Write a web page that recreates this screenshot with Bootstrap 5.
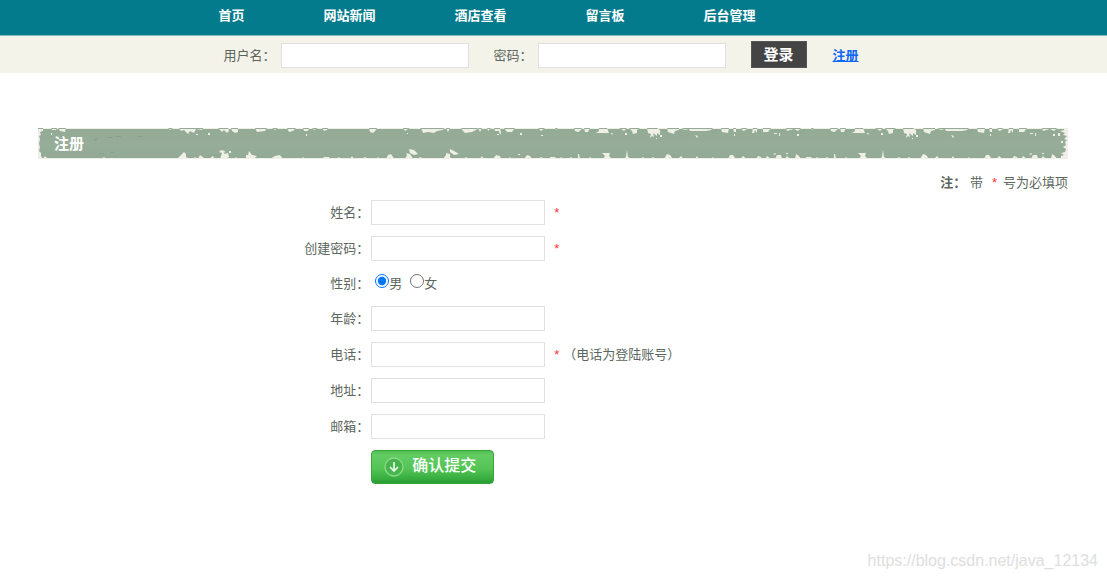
<!DOCTYPE html>
<html lang="zh-CN">
<head>
<meta charset="utf-8">
<meta name="viewport" content="width=device-width, initial-scale=1">
<title>注册</title>
<link href="https://cdn.jsdelivr.net/npm/bootstrap@5.3.0/dist/css/bootstrap.min.css" rel="stylesheet">
<style>
  body { font: 13px/20px "Liberation Sans", "Noto Sans CJK SC", sans-serif; color: #5c665e; background: #fff; }
  .site-nav { background: #047b8c; border-bottom: 1px solid #82bbc1; height: 36px; }
  .site-width { width: 100%; max-width: 670px; margin: 0 auto; }
  .site-nav .nav { gap: 79px; padding-top: 6px; }
  .site-nav a { color: #fff; font-weight: 700; text-decoration: none; }
  .login-bar { background: #f4f3e9; height: 37px; }
  .login-bar form { padding-left: 5px; }
  .login-bar label, .join-link { padding-top: 3px; }
  .text-field { border: 1px solid #dfe0df; border-radius: 0; background: #fff; height: 25px; padding: 2px 4px; width: 174px; font-size: 13px; color: inherit; display: block; }
  .login-bar .text-field { width: 188px; margin: 2px 25px 0 5px; }
  .login-btn { background: #444; color: #fff; border: 1px solid #555; border-radius: 0; padding: 0; width: 56px; height: 27px; font-size: 15px; line-height: 25px; font-weight: 700; }
  .join-link { color: #0b66f5; font-weight: 700; margin-left: 26px; }
  .page-main { padding: 55px 39px 24px 38px; }
  .title-bar { display: grid; height: 31px; }
  .title-bar > * { grid-area: 1 / 1; }
  .title-bar h1 { font-size: 15px; line-height: 20px; font-weight: 700; color: #fff; margin: 0; padding-left: 16px; align-self: center; z-index: 1; }
  .hint { padding: 14px 0 7px; }
  .hint .star { margin: 0 6px 0 9px; }
  .star { color: #f33; }
  .form-line { display: grid; grid-template-columns: 11fr 23fr; margin-bottom: 11px; align-items: center; min-height: 23px; }
  .form-line > :first-child { text-align: right; padding-right: 2px; }
  .form-line .star { margin-left: 9px; }
  .form-line input[type=radio] { width: 14px; height: 14px; margin: 0; accent-color: #0075ff; }
  .send-btn { display: flex; align-items: center; width: 123px; height: 34px; padding: 0 14px 3px 11px; gap: 7px; border: 1px solid #35a83c; border-radius: 4px; color: #fff; font-size: 16px; line-height: 24px; font-weight: 500; background: linear-gradient(#51bd52, #63cc64 12%, #54c456 55%, #38ae40 86%, #289b32); white-space: nowrap; }
  .page-foot { font-size: 16px; line-height: 20px; color: #dedede; padding: 0 9px 8px; }
</style>
</head>
<body class="d-flex flex-column min-vh-100">
<header>
  <nav class="site-nav">
    <div class="site-width">
      <div class="nav flex-nowrap text-nowrap">
        <a href="#">首页</a>
        <a href="#">网站新闻</a>
        <a href="#">酒店查看</a>
        <a href="#">留言板</a>
        <a href="#">后台管理</a>
      </div>
    </div>
  </nav>
  <div class="login-bar">
    <form class="site-width d-flex align-items-center h-100 text-nowrap">
      <label for="user">用户名：</label>
      <input class="text-field" id="user" type="text">
      <label for="pass">密码：</label>
      <input class="text-field" id="pass" type="password">
      <button class="login-btn" type="button">登录</button>
      <a class="join-link" href="#">注册</a>
    </form>
  </div>
</header>

<main class="page-main">
  <div class="title-bar">
    <svg width="100%" height="31" aria-hidden="true">
      <defs>
        <pattern id="worn" width="256" height="31" patternUnits="userSpaceOnUse">
          <path fill="#efeee7" d="M0 0H256V1H0z M5 0l1 2 2-2z M24 0l1 3 3 1 3-2 1-2z M34 0l1 4 3 0 2-4z M49 0l0 3-3 2h13l-2-5z M69 0l5 3 3-3z M79 0l3 3 1 3 4-1 0-3 3-2z M97 0l1 5 3 1-1 4 2-2 2 1-1-4 4 3 0-3 3 2 0-5-3-2z M117 0l1 4 6 2 1-3 4-1 0-2z M132 0l2 2 5-1 1 2h16l5-1 2-2z M171 0l1 4 6 1 1-5z M183 0l1 4 2 0v-4z M191 0l2 3 3-1 1-2z M203 0l-1 5 2 0 1-3 2 3v-5z M213 0l0 4 5 0 3-4z M236 0l1 3 7-2 4 2 3-3z M61 5l1 2 1-2z M75 5h2v2h-2z M106 10h1v1h-1z M110 7h2v2h-2z M145 7l3 1-1 2z M184 6h1v2h-1z M224 5h3v1h-3z M229 5h1v3h-1z M247 6h2v2h-2z"/>
          <path fill="#efeee7" d="M0 30H256V31H0z M0 31v-2l5 0 2 2z M9 31l2-2 3 2z M18 31l3-2 3 2z M28 31l0-5 1 0 1 5z M38 31l2-2 3 2z M53 31l2-3-3-3 8 0-1 3 3 3z M73 31l3-2 1-7 1 7 4 2z M90 31l3-2 3 2z M100 31l3-2 3 2z M114 31l3-5 3 1 3 4z M128 31l3-3 3 3z M145 31l2-3 2 3z M161 31l2-2 2 2z M178 31l2-4 3 0 3 4z M190 31l3-3 4 3z M206 31l2-3 3 1 1 2z M215 31l2-3 4 3z M225 31l2-4 4 0 1 4z M235 31l2-3 3 3z M245 31l1-5 3 2 2 3z M223 26l3-1-1 2z M236 25h2v1h-2z"/>
        </pattern>
        <linearGradient id="moss" x2="0" y2="1">
          <stop offset="0" stop-color="#93aa95"/><stop offset=".5" stop-color="#97ad99"/><stop offset="1" stop-color="#92aa95"/>
        </linearGradient>
      </defs>
      <rect width="100%" height="31" fill="url(#moss)"/>
      <svg x="512" width="100%" height="31"><rect width="100%" height="31" fill="url(#worn)"/></svg>
      <!-- left half, with its own chips and scratches -->
      <g fill="#efeee7">
        <path d="M0 0H512V1H0z M0 0v31h5l-2-3 0-3-2-2 1-4-1-3 1-5-1-3 2-1-1-3 3-1 0-3z M13 0l1 2 4 0 1-2z M20 0l2 3 5 1 1-4z M130 0l2 2 3-2z M141 0l2 3 3-1 4 4 2-3 4 2 2-4 6 1 2-3z M180 0l4 4 2-2 3 3 2-2-1-3z M193 0l1 3 3 2 3-1 0-4z M217 0l2 4 8-1 2-3z M234 0l3 2 3-2z M249 0l2 4 4-1 3-3z M265 0l1 3 4 0 1-3z M274 0l2 2 4-2z M284 0l2 3 3-1 1-2z M331 0l1 4 3 1 3-3 1-2z M365 0l2 3 5-3z M382 0l2 2 1 3 5-1 6 1 3-2 6-1 1-2z M408 0l2 4 2-4z M423 0l2 3 2 2 7-1 4-2 2-2z M440 0l2 4 2-4z M449 0l1 3 3-3z M456 0l1 3 4 0 1 4 1-2-1-5z M466 0l3 4 5 0 3-4z M500 0l3 3 4-3z M13 5h1v2h-1z M158 6h2v1h-2z M170 5h2v2h-2z M268 6h1v2h-1z M369 5h1v1h-1z M459 6h2v1h-2z M482 5h2v2h-2z M503 7h2v1h-2z"/>
        <path d="M0 30H512V31H0z M5 31l2-3 3 3z M64 31l2-2 2 2z M139 31l3-3 4-4 2 2 0 3 4 2z M155 31l2-2 2 2z M160 31l2-4 4 3 3 1z M171 31l4-3 2 3z M182 31l2-6-3-1 2-2 4 1-1 3 4-1 1 4-3 2z M196 31l2-2 2 2z M208 31l0-4 2 0 1-4 3 4 5 1-2 2 3 1z M232 31l5-3 5-1 3 4z M263 31l2-2 2 2z M284 31l2-2 5 0 1 2z M298 31l3-2 2 2z M312 31l2-3 2 3z M323 31l4-2 3 2z M338 31l2-2 2 2z M348 31l2-4 3-1 2 3 1 2z M367 31l2-4-1-2 4 1 2 3 1 2z M371 21l5 1 4 4-4 1-4-2z M380 31l2-2 4 2z M405 31l3-4 0-2 4 1 0 3 2 2z M412 21l4 2 5 3-5 1-4-3z M425 31l3-2 3 2z M442 31l2-3 2 3z M455 31l3-4 4 1 1 3z M470 31l2-2 2 2z M486 31l3-4 3 1 2 3z M500 31l3-2 4 2z M191 23h2v2h-2z M480 26h2v1h-2z"/>
      </g>
      <path fill="#7f9883" opacity=".6" d="M56 11l4-1-3 3z M70 9h4v1h-4z M78 8h5v1h-5z M99 8h6v1h-6z M61 25h5v1h-5z M72 24h4v1h-4z"/>
      <svg x="100%" width="12" height="31" overflow="visible">
        <path fill="#efeee7" d="M0 0v31h-7l0-3 3-1-3-2 4-1 1-3-3-2 3-2-1-3 2-2-3-1 3-3-4-1 2-2-5-2 4-1 0-2z M-10 5h2v3h-2z M-7 13h2v2h-2z"/>
      </svg>
    </svg>
    <h1>注册</h1>
  </div>

  <p class="hint text-end mb-0"><b>注：</b> 带<span class="star">*</span>号为必填项</p>

  <form>
    <div class="form-line">
      <label for="name">姓名：</label>
      <div class="d-flex align-items-center"><input class="text-field" id="name" type="text"><span class="star">*</span></div>
    </div>
    <div class="form-line">
      <label for="newpass">创建密码：</label>
      <div class="d-flex align-items-center"><input class="text-field" id="newpass" type="password"><span class="star">*</span></div>
    </div>
    <div class="form-line" role="radiogroup" aria-labelledby="sex">
      <span id="sex">性别：</span>
      <div class="d-flex ps-1">
        <input type="radio" id="male" name="sex" checked><label for="male">男</label>
        <input class="ms-2" type="radio" id="female" name="sex"><label for="female">女</label>
      </div>
    </div>
    <div class="form-line">
      <label for="age">年龄：</label>
      <input class="text-field" id="age" type="text">
    </div>
    <div class="form-line">
      <label for="phone">电话：</label>
      <div class="d-flex align-items-center"><input class="text-field" id="phone" type="tel"><span class="star">*</span><span class="ms-1">（电话为登陆账号）</span></div>
    </div>
    <div class="form-line">
      <label for="address">地址：</label>
      <input class="text-field" id="address" type="text">
    </div>
    <div class="form-line">
      <label for="mail">邮箱：</label>
      <input class="text-field" id="mail" type="email">
    </div>
    <div class="form-line mb-0">
      <span></span>
      <button class="send-btn" type="button">
        <svg width="22" height="22" viewBox="0 0 22 22" fill="none" aria-hidden="true">
          <circle cx="11" cy="12" r="9" fill="#48b54c" stroke="#8edb8c" stroke-width="1.3"/>
          <path d="M11 7v9M7 12l4 4 4-4" stroke="#e9f9e8" stroke-width="1.700"/>
        </svg>
        确认提交
      </button>
    </div>
  </form>
</main>

<footer class="page-foot text-end mt-auto">https://blog.csdn.net/java_12134</footer>
<script src="https://cdn.jsdelivr.net/npm/bootstrap@5.3.0/dist/js/bootstrap.bundle.min.js"></script>
</body>
</html>
